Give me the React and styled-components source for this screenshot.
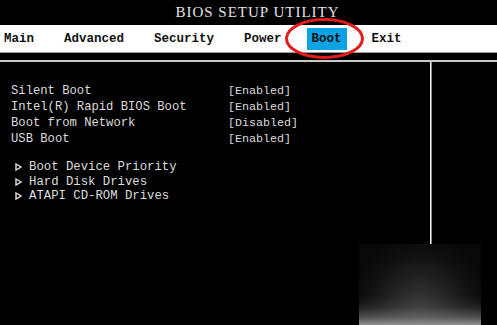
import React from "react";
import styled, { createGlobalStyle } from "styled-components";

const Global = createGlobalStyle`
  html, body { margin: 0; padding: 0; background: #000; }
  body { width: 497px; height: 325px; overflow: hidden; }
`;

const Screen = styled.div`
  position: relative;
  width: 497px;
  height: 325px;
  background: #000;
  display: flex;
  flex-direction: column;
  font-family: "Liberation Mono", "DejaVu Sans Mono", monospace;
  color: #dcdcdc;
`;

const TitleBar = styled.div`
  height: 25px;
  display: flex;
  align-items: center;
  justify-content: center;
  padding-left: 18px;
  font-family: "Liberation Serif", serif;
  font-size: 15px;
  letter-spacing: 1px;
  color: #e4e4e4;
`;

const MenuBar = styled.div`
  height: 27px;
  background: #fff;
  border-bottom: 1px solid #9a9a9a;
  display: flex;
  align-items: center;
  gap: 20px;
  margin-left: -1px;
`;

const MenuItem = styled.div`
  height: 22px;
  padding: 0 5px;
  display: flex;
  align-items: center;
  font-size: 12.5px;
  font-weight: bold;
  color: #111;
  background: ${(p) => (p.$active ? "#0ba3e3" : "transparent")};
`;

const Spacer = styled.div`
  height: 7px;
`;

const Main = styled.div`
  display: grid;
  grid-template-columns: 430px 2px 1fr;
  height: 182px;
  border-top: 2px solid #c8c8c8;
`;

const LeftPanel = styled.div`
  padding: 21px 0 0 11px;
  display: flex;
  flex-direction: column;
`;

const Divider = styled.div`
  background: #f0f0f0;
  border-right: 1px solid #888;
  box-sizing: border-box;
`;

const SettingRow = styled.div`
  display: grid;
  grid-template-columns: 217px auto;
  height: 16px;
  line-height: 16px;
  font-size: 12.2px;
  white-space: pre;
`;

const Value = styled.span`
  font-size: 11.7px;
`;

const SubList = styled.div`
  margin-top: 13px;
  display: flex;
  flex-direction: column;
`;

const SubItem = styled.div`
  display: flex;
  align-items: center;
  gap: 7px;
  height: 14.5px;
  line-height: 14.5px;
  font-size: 12.3px;
  padding-left: 4px;
  white-space: pre;
`;

const Footer = styled.div`
  flex: 1;
`;

const Watermark = styled.div`
  position: absolute;
  left: 359px;
  top: 244px;
  width: 122px;
  height: 81px;
  background:
    linear-gradient(
      to top,
      rgba(145, 145, 145, 1) 0%,
      rgba(110, 110, 110, 0.7) 9%,
      rgba(80, 80, 80, 0.25) 22%,
      rgba(60, 60, 60, 0) 35%
    ),
    radial-gradient(
      ellipse 60% 110% at 50% 100%,
      #4a4a4a 0%,
      #333 30%,
      #1e1e1e 58%,
      #101010 80%,
      #090909 100%
    );
`;

const Annotation = styled.svg`
  position: absolute;
  left: 285px;
  top: 18px;
  overflow: visible;
`;

const Arrow = () => (
  <svg width="7" height="8" viewBox="0 0 7 8">
    <path d="M1 1 L6 4 L1 7 Z" fill="none" stroke="#e0e0e0" strokeWidth="1.4" strokeLinejoin="miter" />
  </svg>
);

const menus = ["Main", "Advanced", "Security", "Power", "Boot", "Exit"];
const settings = [
  ["Silent Boot", "[Enabled]"],
  ["Intel(R) Rapid BIOS Boot", "[Enabled]"],
  ["Boot from Network", "[Disabled]"],
  ["USB Boot", "[Enabled]"],
];
const subs = ["Boot Device Priority", "Hard Disk Drives", "ATAPI CD-ROM Drives"];

export default function App() {
  return (
    <>
      <Global />
      <Screen>
        <TitleBar>BIOS SETUP UTILITY</TitleBar>
        <MenuBar>
          {menus.map((m) => (
            <MenuItem key={m} $active={m === "Boot"}>
              {m}
            </MenuItem>
          ))}
        </MenuBar>
        <Spacer />
        <Main>
          <LeftPanel>
            {settings.map(([l, v]) => (
              <SettingRow key={l}>
                <span>{l}</span>
                <Value>{v}</Value>
              </SettingRow>
            ))}
            <SubList>
              {subs.map((s) => (
                <SubItem key={s}>
                  <Arrow />
                  <span>{s}</span>
                </SubItem>
              ))}
            </SubList>
          </LeftPanel>
          <Divider />
          <div />
        </Main>
        <Footer />
        <Watermark />
        <Annotation width="79" height="41" viewBox="0 0 79 41">
          <ellipse cx="39.5" cy="20.5" rx="38" ry="19" fill="none" stroke="#e31b1b" strokeWidth="3" />
        </Annotation>
      </Screen>
    </>
  );
}
